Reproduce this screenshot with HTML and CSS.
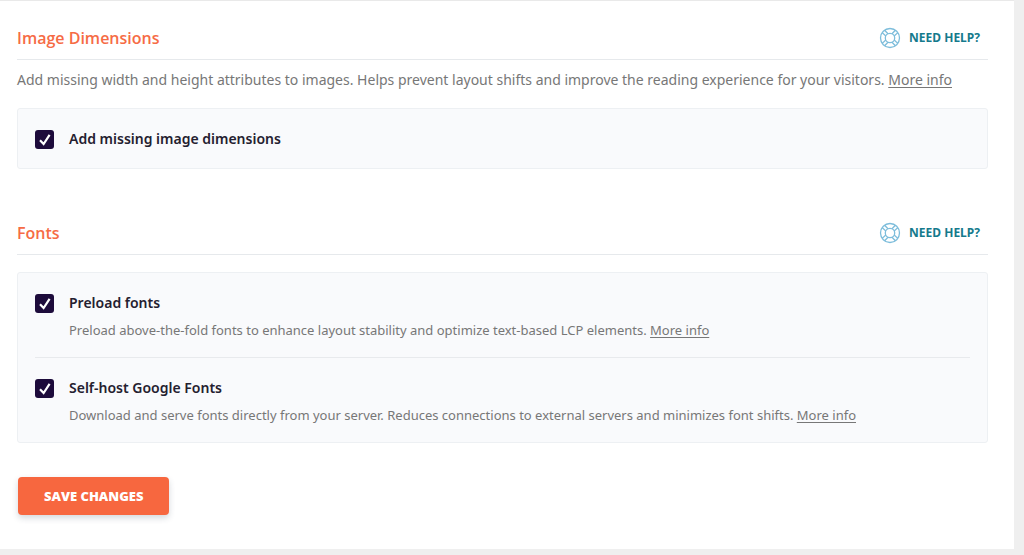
FILE: index.html
```html
<!DOCTYPE html>
<html lang="en">
<head>
<meta charset="utf-8">
<meta name="viewport" content="width=device-width, initial-scale=1">
<title>Media settings</title>
<link rel="stylesheet" href="styles.css">
</head>
<body>
<svg class="sprite" aria-hidden="true">
  <symbol id="lifebuoy" viewBox="0 0 22 22">
    <circle cx="11" cy="11" r="9.5"/>
    <circle cx="11" cy="11" r="4.7"/>
    <path d="M3.2 5.6l3.6 3.4M5.6 3.2l3.4 3.6M18.8 5.6l-3.6 3.4M16.4 3.2l-3.4 3.6M3.2 16.4l3.6-3.4M5.6 18.8l3.4-3.6M18.8 16.4l-3.6-3.4M16.4 18.8l-3.4-3.6"/>
  </symbol>
</svg>
<main class="panel">
  <form class="settings">
    <section class="section">
      <header class="section-header">
        <h2 class="section-title">Image Dimensions</h2>
        <a class="help" href="#help-images"><svg class="help-icon" aria-hidden="true"><use href="#lifebuoy"/></svg>Need help?</a>
      </header>
      <p class="section-text">Add missing width and height attributes to images. Helps prevent layout shifts and improve the reading experience for your visitors. <a href="#dimensions">More info</a></p>
      <div class="card">
        <div class="option">
          <input class="check" type="checkbox" id="dimensions" checked>
          <label class="option-label" for="dimensions">Add missing image dimensions</label>
        </div>
      </div>
    </section>
    <section class="section">
      <header class="section-header">
        <h2 class="section-title">Fonts</h2>
        <a class="help" href="#help-fonts"><svg class="help-icon" aria-hidden="true"><use href="#lifebuoy"/></svg>Need help?</a>
      </header>
      <div class="card">
        <div class="option">
          <input class="check" type="checkbox" id="preload" checked>
          <label class="option-label" for="preload">Preload fonts</label>
          <p class="option-text">Preload above-the-fold fonts to enhance layout stability and optimize text-based LCP elements. <a href="#preload">More info</a></p>
        </div>
        <div class="option">
          <input class="check" type="checkbox" id="selfhost" checked>
          <label class="option-label" for="selfhost">Self-host Google Fonts</label>
          <p class="option-text">Download and serve fonts directly from your server. Reduces connections to external servers and minimizes font shifts. <a href="#selfhost">More info</a></p>
        </div>
      </div>
    </section>
    <button class="save" type="submit">Save changes</button>
  </form>
</main>
</body>
</html>
```
FILE: styles.css
```css
* {
  box-sizing: border-box;
}

body {
  margin: 0;
  background: #efefef;
  color: #777777;
  font-family: "Noto Sans", "Open Sans", sans-serif;
}

.sprite {
  display: none;
}

.panel {
  margin-right: 10px;
  padding: 16px 26px 34px 17px;
  border-top: 1px solid #e9e9e9;
  background: #ffffff;
}

.settings,
.section {
  display: flex;
  flex-direction: column;
}

.section {
  margin-bottom: 34px;
}

.section + .section .card {
  margin-top: 17px;
}

.section + .section {
  margin-top: 9px;
}

.section-header {
  display: flex;
  align-items: center;
  justify-content: space-between;
  height: 43px;
  padding-right: 8px;
  border-bottom: 1px solid #e6e9ec;
}

.section-title {
  margin: 0;
  color: #f66b45;
  font-family: "Open Sans", "Noto Sans", sans-serif;
  font-size: 16px;
  font-weight: 600;
  line-height: 24px;
}

.help {
  display: flex;
  align-items: center;
  gap: 8px;
  color: #157a8c;
  font-size: 12px;
  font-weight: 700;
  line-height: 20px;
  text-decoration: none;
  text-transform: uppercase;
}

.help-icon {
  width: 22px;
  height: 22px;
  fill: none;
  stroke: #7dbddb;
  stroke-width: 1.3;
}

.section-text {
  margin: 8px 0 17px;
  font-size: 14px;
  line-height: 23px;
}

.section-text a,
.option-text a {
  color: inherit;
  text-underline-offset: 2px;
}

.card {
  padding: 0 17px;
  border: 1px solid #edf0f3;
  border-radius: 3px;
  background: #f9fafc;
}

.option {
  display: grid;
  grid-template-columns: 18px 1fr;
  column-gap: 16px;
  row-gap: 5px;
  align-items: center;
  padding: 18px 0 17px;
}

.option + .option {
  border-top: 1px solid #e8eaed;
}

.check {
  appearance: none;
  width: 19px;
  height: 19px;
  margin: 0;
  border-radius: 3px;
  background: #1d0b3b url("data:image/svg+xml,%3Csvg xmlns='http://www.w3.org/2000/svg' viewBox='0 0 19 19'%3E%3Cpath d='M5 10.2l3.6 3.8 6-9.2' fill='none' stroke='white' stroke-width='2.2'/%3E%3C/svg%3E") center / contain no-repeat;
}

.option-label {
  color: #24202f;
  font-size: 14px;
  font-weight: 600;
  line-height: 24px;
}

.option-text {
  grid-column: 2;
  margin: 0;
  font-size: 13px;
  line-height: 20px;
}

.save {
  align-self: flex-start;
  margin-left: 1px;
  padding: 9px 26px;
  border: 0;
  border-radius: 4px;
  background: #f7673f;
  box-shadow: 0 3px 6px rgba(40, 60, 80, 0.2);
  color: #ffffff;
  font: 800 13px/20px "Open Sans", "Noto Sans", sans-serif;
  text-transform: uppercase;
}
```
